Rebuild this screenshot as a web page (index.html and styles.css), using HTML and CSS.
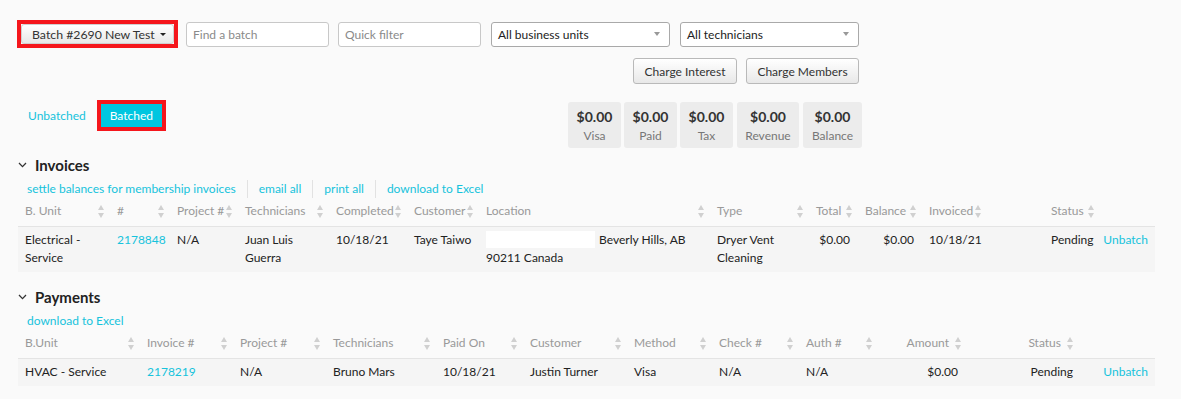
FILE: index.html
```html
<!DOCTYPE html>
<html>
<head>
<meta charset="utf-8">
<link rel="stylesheet" href="styles.css">
</head>
<body>
<div class="page">
  <div class="toolbar">
    <div class="filters">
      <span class="highlight">
        <button class="btn batch-btn">Batch #2690 New Test <span class="caret"></span></button>
      </span>
      <input class="field w143" type="text" placeholder="Find a batch">
      <input class="field w143 ml9" type="text" placeholder="Quick filter">
      <div class="select ml10"><span>All business units</span><span class="sel-caret"></span></div>
      <div class="select ml10"><span>All technicians</span><span class="sel-caret"></span></div>
    </div>
    <div class="actions">
      <button class="btn action">Charge Interest</button>
      <button class="btn action">Charge Members</button>
    </div>
    <div class="summary-row">
      <div class="tabs">
        <a class="tab-link">Unbatched</a>
        <span class="highlight"><span class="tab-active">Batched</span></span>
      </div>
      <div class="tiles">
        <div class="tile"><b>$0.00</b><span>Visa</span></div>
        <div class="tile"><b>$0.00</b><span>Paid</span></div>
        <div class="tile"><b>$0.00</b><span>Tax</span></div>
        <div class="tile"><b>$0.00</b><span>Revenue</span></div>
        <div class="tile"><b>$0.00</b><span>Balance</span></div>
      </div>
    </div>
  </div>

  <div class="section-head first">
    <svg class="chev" width="9" height="6" viewBox="0 0 9 6"><polyline points="1,1 4.5,4.6 8,1" fill="none" stroke="#333" stroke-width="1.3"/></svg>
    <h2>Invoices</h2>
  </div>
  <div class="links">
    <a class="lk">settle balances for membership invoices</a><a class="lk">email all</a><a class="lk">print all</a><a class="lk">download to Excel</a>
  </div>
  <table class="grid">
    <colgroup>
      <col style="width:92px"><col style="width:60px"><col style="width:68px"><col style="width:91px"><col style="width:78px"><col style="width:72px"><col style="width:231px"><col style="width:99px"><col style="width:49px"><col style="width:64px"><col style="width:65px"><col style="width:57px"><col style="width:56px"><col style="width:55px">
    </colgroup>
    <thead>
      <tr>
        <th><div class="th">B. Unit<i class="sort"></i></div></th>
        <th><div class="th">#<i class="sort"></i></div></th>
        <th><div class="th">Project #<i class="sort"></i></div></th>
        <th><div class="th">Technicians<i class="sort"></i></div></th>
        <th><div class="th">Completed<i class="sort"></i></div></th>
        <th><div class="th">Customer<i class="sort"></i></div></th>
        <th><div class="th">Location<i class="sort"></i></div></th>
        <th><div class="th">Type<i class="sort"></i></div></th>
        <th><div class="th">Total<i class="sort"></i></div></th>
        <th><div class="th">Balance<i class="sort"></i></div></th>
        <th><div class="th">Invoiced<i class="sort"></i></div></th>
        <th></th>
        <th><div class="th">Status<i class="sort"></i></div></th>
        <th></th>
      </tr>
    </thead>
    <tbody>
      <tr>
        <td>Electrical - Service</td>
        <td><a class="cell-link">2178848</a></td>
        <td>N/A</td>
        <td>Juan Luis Guerra</td>
        <td>10/18/21</td>
        <td>Taye Taiwo</td>
        <td><span class="redact"></span> Beverly Hills, AB 90211 Canada</td>
        <td>Dryer Vent Cleaning</td>
        <td class="num">$0.00</td>
        <td class="num">$0.00</td>
        <td>10/18/21</td>
        <td></td>
        <td class="num">Pending</td>
        <td class="num"><a class="cell-link">Unbatch</a></td>
      </tr>
    </tbody>
  </table>

  <div class="section-head second">
    <svg class="chev" width="9" height="6" viewBox="0 0 9 6"><polyline points="1,1 4.5,4.6 8,1" fill="none" stroke="#333" stroke-width="1.3"/></svg>
    <h2>Payments</h2>
  </div>
  <div class="links">
    <a class="lk">download to Excel</a>
  </div>
  <table class="grid">
    <colgroup>
      <col style="width:122px"><col style="width:93px"><col style="width:93px"><col style="width:110px"><col style="width:87px"><col style="width:104px"><col style="width:85px"><col style="width:87px"><col style="width:79px"><col style="width:89px"><col style="width:112px"><col style="width:76px">
    </colgroup>
    <thead>
      <tr>
        <th><div class="th">B.Unit<i class="sort"></i></div></th>
        <th><div class="th">Invoice #<i class="sort"></i></div></th>
        <th><div class="th">Project #<i class="sort"></i></div></th>
        <th><div class="th">Technicians<i class="sort"></i></div></th>
        <th><div class="th">Paid On<i class="sort"></i></div></th>
        <th><div class="th">Customer<i class="sort"></i></div></th>
        <th><div class="th">Method<i class="sort"></i></div></th>
        <th><div class="th">Check #<i class="sort"></i></div></th>
        <th><div class="th">Auth #<i class="sort"></i></div></th>
        <th><div class="th right">Amount<i class="sort"></i></div></th>
        <th><div class="th right">Status<i class="sort"></i></div></th>
        <th></th>
      </tr>
    </thead>
    <tbody>
      <tr>
        <td>HVAC - Service</td>
        <td><a class="cell-link">2178219</a></td>
        <td>N/A</td>
        <td>Bruno Mars</td>
        <td>10/18/21</td>
        <td>Justin Turner</td>
        <td>Visa</td>
        <td>N/A</td>
        <td>N/A</td>
        <td class="num amt">$0.00</td>
        <td class="num st">Pending</td>
        <td class="num"><a class="cell-link">Unbatch</a></td>
      </tr>
    </tbody>
  </table>
</div>
</body>
</html>
```

FILE: styles.css
```css
* { box-sizing: border-box; }
html, body { margin: 0; padding: 0; }
body {
  background: #fafafa;
  font-family: Lato, "Liberation Sans", sans-serif;
  font-size: 12px;
  color: #222;
}
.page { padding: 20px 26px 0 18px; }

.toolbar { width: 845px; margin-left: -1px; }
.filters { display: flex; align-items: center; height: 28px; }
.highlight { display: inline-block; border: 4px solid #f5161c; }
.btn {
  font-family: inherit;
  font-size: 12px;
  color: #333;
  background: linear-gradient(#ffffff, #e8e8e8);
  border: 1px solid #b9b9b9;
  border-radius: 3px;
  cursor: pointer;
}
.batch-btn {
  display: flex; align-items: center;
  height: 20px; width: 153px;
  padding: 0 0 0 10px;
  font-size: 12.3px;
  border-color: #cfcfcf;
}
.caret {
  display: inline-block; width: 0; height: 0; margin-left: 5px;
  border-left: 3.5px solid transparent; border-right: 3.5px solid transparent;
  border-top: 3.5px solid #222;
}
.field {
  height: 25px; margin-left: 8px;
  border: 1px solid #c8c8c8; border-radius: 3px;
  background: #fff;
  font-family: inherit; font-size: 12px; color: #333;
  padding: 0 6px;
}
.field::placeholder { color: #8a8a8a; }
.w143 { width: 143px; }
.ml9 { margin-left: 9px; }
.ml10 { margin-left: 10px; }
.select {
  display: flex; align-items: center; justify-content: space-between;
  width: 179px; height: 25px;
  border: 1px solid #a9a9a9; border-radius: 3px; background: #fff;
  padding: 0 9px 0 6px; color: #222;
}
.sel-caret {
  width: 0; height: 0;
  border-left: 3px solid transparent; border-right: 3px solid transparent;
  border-top: 4px solid #999;
}
.actions { display: flex; justify-content: flex-end; gap: 9px; margin-top: 10px; margin-right: 3px; }
.action { height: 26px; padding: 0 8px; font-size: 12px; }
.action:first-child { width: 104px; }
.action:last-child { width: 113px; }

.summary-row { display: flex; justify-content: space-between; margin-top: 16px; }
.tabs { display: flex; align-items: center; height: 31px; padding-left: 11px; }
.tab-link { color: #16c3dc; margin-right: 11px; }
.tab-active {
  display: block; background: #00c6e0; color: #fff;
  padding: 0 9px; height: 23px; line-height: 23px; width: 61px;
}
.tiles { display: flex; gap: 3px; margin-top: 2px; }
.tile {
  display: flex; flex-direction: column; align-items: center;
  background: #ececec; border-radius: 3px; height: 46px; width: 53px;
  padding: 5px 4px 0;
}
.tile:nth-child(4) { width: 62px; margin-left: 1px; }
.tile:nth-child(5) { width: 59px; margin-left: 1px; }
.tile b { font-size: 14px; color: #333; line-height: 20px; }
.tile span { font-size: 12px; color: #777; line-height: 18px; }

.section-head { display: flex; align-items: center; height: 20px; }
.section-head.first { margin-top: 7px; }
.section-head.second { margin-top: 15px; }
.chev { margin-right: 8px; }
.section-head h2 { margin: 0; font-size: 15px; font-weight: 700; color: #222; }

.links { display: flex; height: 18px; line-height: 18px; margin-top: 5px; padding-left: 9px; }
.links .lk { color: #16c3dc; padding: 0 11px; border-left: 1px solid #e2e2e2; }
.links .lk:first-child { padding-left: 0; border-left: none; }

.grid { width: 1137px; table-layout: fixed; border-collapse: collapse; margin-top: 1px; }
.grid th { padding: 3px 5px 6px 7px; font-weight: 400; color: #999; text-align: left; border-bottom: 1px solid #e4e4e4; }
.th { display: flex; align-items: center; justify-content: space-between; line-height: 18px; }
.th.right { justify-content: flex-end; }
.th.right .sort { margin-left: 6px; }
.sort {
  display: inline-block; width: 7px; height: 13px; flex: none;
  position: relative;
}
.sort::before, .sort::after {
  content: ""; position: absolute; left: 0; width: 0; height: 0;
  border-left: 3.5px solid transparent; border-right: 3.5px solid transparent;
}
.sort::before { top: 0; border-bottom: 5px solid #d0d0d0; }
.sort::after { bottom: 0; border-top: 5px solid #d0d0d0; }
.grid td { padding: 4px 7px 5px 7px; line-height: 18px; background: #f5f5f5; vertical-align: top; color: #222; }
.grid td.num { text-align: right; padding-right: 8px; }
.grid td.amt { padding-right: 9px; }
.grid td.st { padding-right: 6px; }
.grid td:last-child { padding-right: 7px; padding-left: 0; }
.cell-link { color: #16c3dc; }
.redact { display: inline-block; width: 109px; height: 17px; background: #fff; vertical-align: top; margin-right: 1px; }
```
